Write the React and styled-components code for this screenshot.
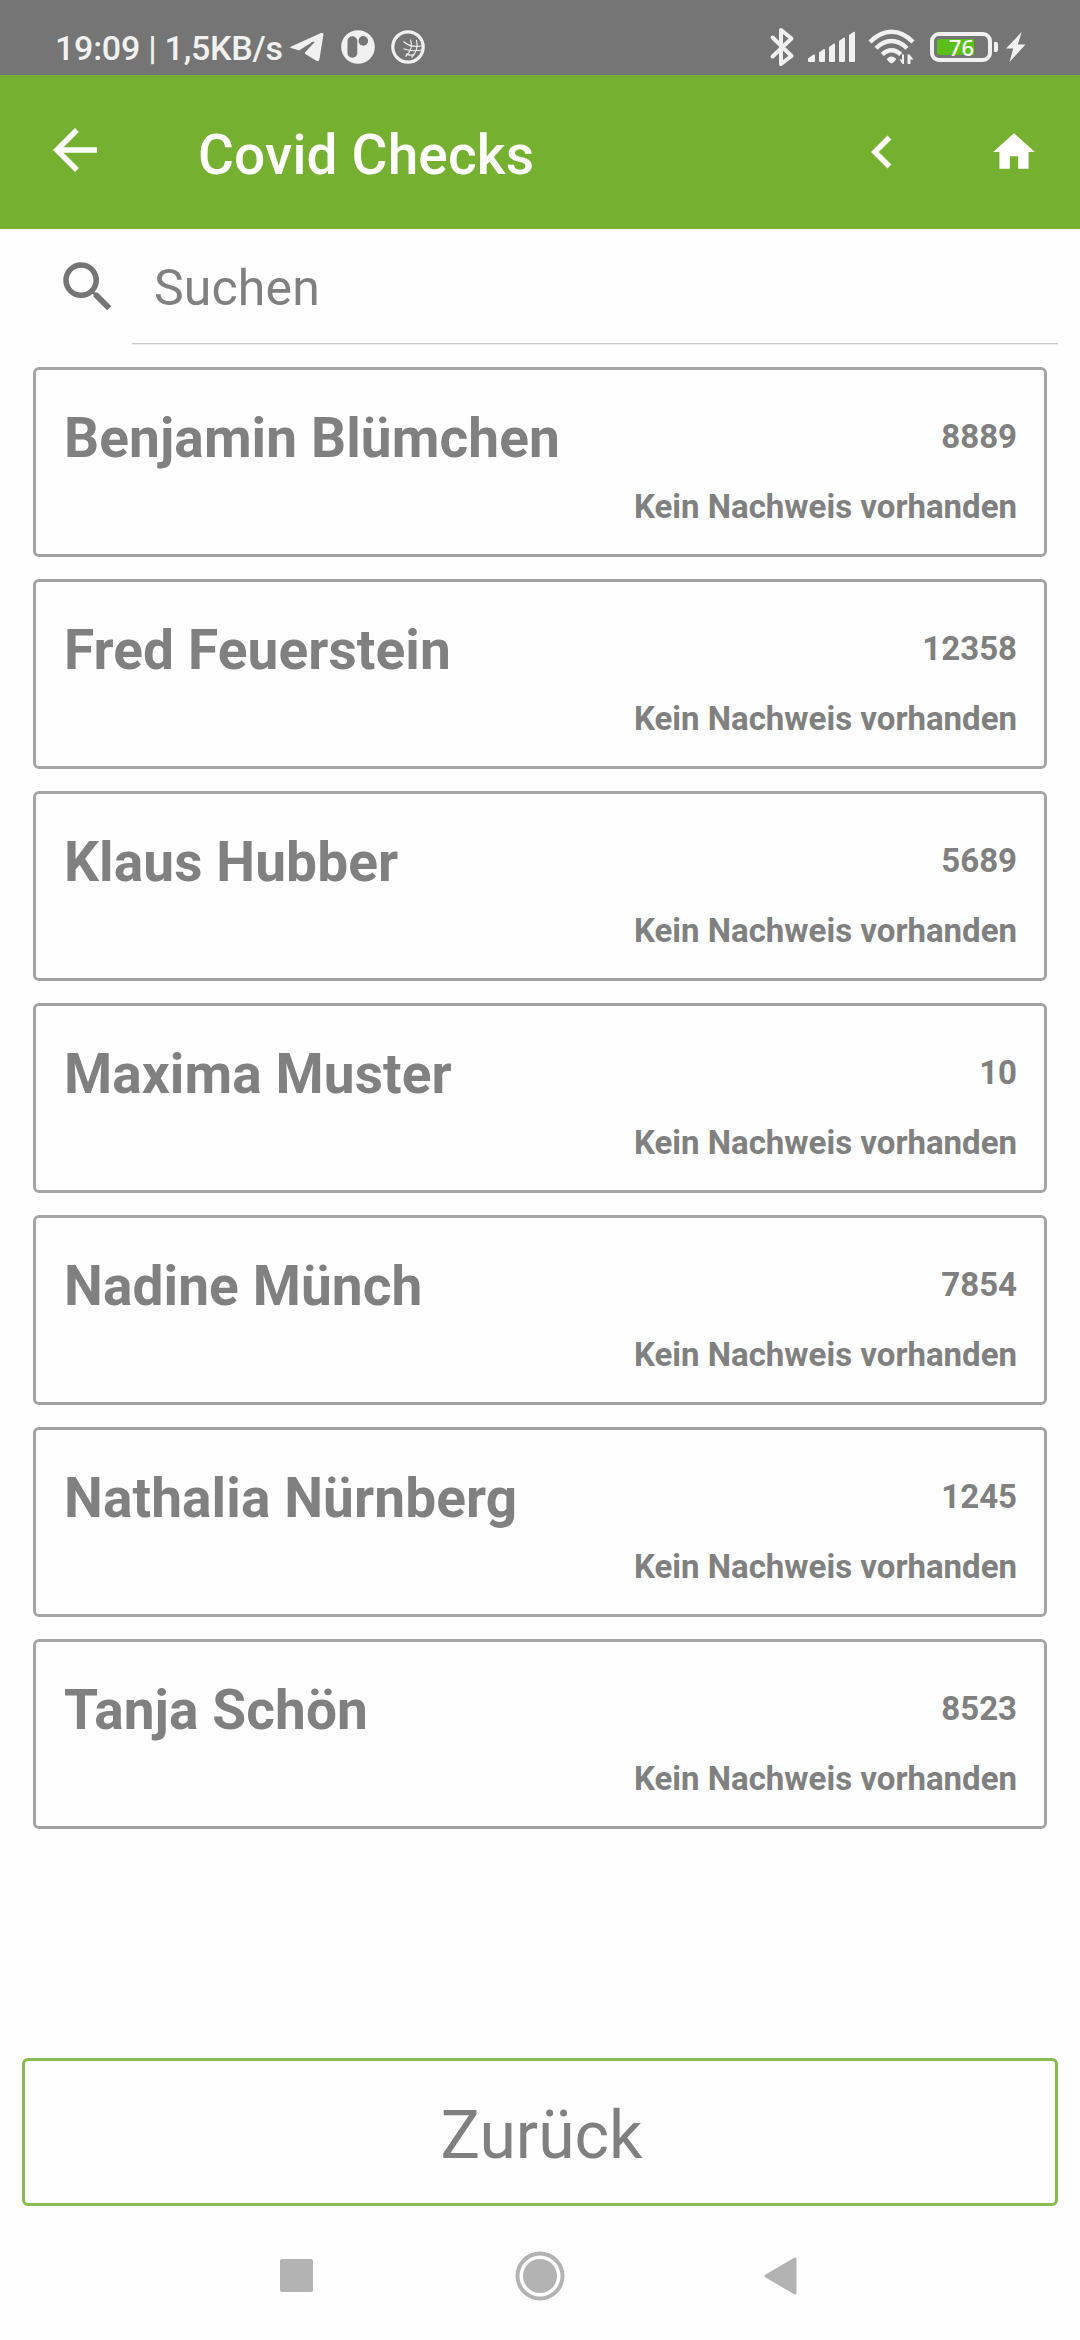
import React from "react";
import styled, { createGlobalStyle } from "styled-components";
import { MdArrowBack, MdChevronLeft, MdHome, MdSearch } from "react-icons/md";

const people = [
  { name: "Benjamin Blümchen", number: "8889" },
  { name: "Fred Feuerstein", number: "12358" },
  { name: "Klaus Hubber", number: "5689" },
  { name: "Maxima Muster", number: "10" },
  { name: "Nadine Münch", number: "7854" },
  { name: "Nathalia Nürnberg", number: "1245" },
  { name: "Tanja Schön", number: "8523" },
];

const StatusIcons = () => (
  <>
    {/* bluetooth */}
    <Icon width="28" height="42" viewBox="0 0 28 42" $left="0">
      <path
        d="M4.6 11.5 L23.5 30 L13 38 V4 L23.5 12.5 L4.6 30.5"
        fill="none"
        stroke="#f1f1f1"
        strokeWidth="4"
        strokeLinecap="round"
        strokeLinejoin="round"
      />
    </Icon>
    {/* signal */}
    <Icon width="48" height="32" viewBox="0 0 48 32" $left="12">
      <g fill="#f1f1f1">
        <path d="M0 27.5 L5.5 23.5 Q7 23 7 24.5 V30 Q7 31 6 31 H1 Q0 31 0 30z" />
        <path d="M11 21.5 L15.8 18 Q17 17.5 17 19 V30 Q17 31 16 31 H12 Q11 31 11 30z" />
        <path d="M21 16 L25.8 12.5 Q27 12 27 13.5 V30 Q27 31 26 31 H22 Q21 31 21 30z" />
        <path d="M31 10 L35.8 6.5 Q37 6 37 7.5 V30 Q37 31 36 31 H32 Q31 31 31 30z" />
        <path d="M41 4 L45.8 .8 Q47 .2 47 1.7 V30 Q47 31 46 31 H42 Q41 31 41 30z" />
      </g>
    </Icon>
    {/* wifi with up/down arrows */}
    <Icon width="48" height="36" viewBox="0 0 48 36" $left="12">
      <g fill="none" stroke="#f1f1f1" strokeWidth="4.4">
        <path d="M2 13 Q12 2.7 23.5 2.7 T45 13" />
        <path d="M8 19.3 Q15 12 23.5 12 T39 19.3" />
        <path d="M14.3 25.5 Q18.5 21.2 23.5 21.2 T32.7 25.5" />
      </g>
      <path
        d="M18.7 30 Q23.5 25.2 28.3 30 Q27 32.5 24.6 34 Q23.5 34.5 22.4 34 Q20 32.5 18.7 30z"
        fill="#f1f1f1"
      />
      <path
        d="M36 25.5 V35 H34.5 L31.5 30.5 H34 V25.5z M39.5 35 V25.5 H41.5 L45.5 30.5 H42.5 V35z"
        fill="#f1f1f1"
      />
    </Icon>
    <Battery>
      <Charge>
        <Percent>76</Percent>
      </Charge>
    </Battery>
    <BatteryTip />
    <Icon width="20" height="30" viewBox="0 0 20 30" $left="8">
      <path d="M15.7 0 L0 16.5 H7.2 L3.5 30 L19.5 12.5 H11.8z" fill="#f1f1f1" />
    </Icon>
  </>
);

const App = () => {
  return (
    <Screen>
      <GlobalStyle />
      <StatusBar>
        <Clock>19:09 | 1,5KB/s</Clock>
        <Icon width="34" height="30" viewBox="0 0 34 30" $left="7">
          <path
            d="M.7 14.7 L31 1.1 Q33.6 .3 33.4 2.7 L29.4 27.4 Q28.8 30 26.3 28.8 L15.3 22 Q14.4 21 15.4 20 L24.3 10.5 Q24.5 9 22.7 9.7 L9.8 18 Q8.8 18.4 7.8 18 L.9 16 Q-.3 15.3 .7 14.7z"
            fill="#f1f1f1"
          />
        </Icon>
        <Icon width="34" height="34" viewBox="0 0 34 34" $left="17">
          <circle cx="17" cy="17" r="16.8" fill="#f1f1f1" />
          <rect x="6.5" y="6.3" width="9.8" height="21.5" rx="4.9" fill="#757575" />
          <circle cx="22.3" cy="10.9" r="4.8" fill="#757575" />
        </Icon>
        <Icon width="34" height="34" viewBox="0 0 34 34" $left="16">
          <circle cx="17" cy="17" r="15.2" fill="none" stroke="#f1f1f1" strokeWidth="3.2" />
          <g fill="none" stroke="#f1f1f1" strokeWidth="1.1">
            <path d="M12.5 11.5 Q19 18 31 15.8" />
            <path d="M12.5 18.8 Q21 22 31 20" />
            <path d="M15 24 Q19 26 23 24.5" />
            <path d="M19.5 9.5 Q23 18.5 14.5 26.5" />
            <path d="M25.5 10 Q28 20 20.5 27.5" />
          </g>
        </Icon>
        <Spacer />
        <StatusIcons />
      </StatusBar>

      <AppBar>
        <MdArrowBack size={66} />
        <Title>Covid Checks</Title>
        <ChevronIcon size={66} />
        <HomeIcon size={50} />
      </AppBar>

      <SearchBar>
        <MdSearch size={66} />
        <SearchField>Suchen</SearchField>
      </SearchBar>

      <List>
        {people.map((person) => (
          <Card key={person.number}>
            <Name>{person.name}</Name>
            <Info>
              <span>{person.number}</span>
              <span>Kein Nachweis vorhanden</span>
            </Info>
          </Card>
        ))}
      </List>

      <BackButton>Zurück</BackButton>

      <NavBar>
        <svg width="33" height="33">
          <rect width="33" height="33" rx="2" fill="#b3b3b3" />
        </svg>
        <svg width="50" height="50" viewBox="0 0 50 50">
          <circle cx="25" cy="25" r="22.5" fill="none" stroke="#b3b3b3" strokeWidth="4" />
          <circle cx="25" cy="25" r="17" fill="#b3b3b3" />
        </svg>
        <svg width="33" height="38" viewBox="0 0 33 38">
          <path
            d="M2 19 L31 2 V36z"
            fill="#b3b3b3"
            stroke="#b3b3b3"
            strokeWidth="3"
            strokeLinejoin="round"
          />
        </svg>
      </NavBar>
    </Screen>
  );
};

const GlobalStyle = createGlobalStyle`
  body {
    margin: 0;
    background-color: #fefefe;
  }
  * {
    box-sizing: border-box;
  }
`;

const Screen = styled.div`
  display: flex;
  flex-direction: column;
  width: 1080px;
  height: 2340px;
  overflow: hidden;
  background-color: #fefefe;
  color: #808080;
  font-family: Roboto, sans-serif;
`;

const StatusBar = styled.div`
  display: flex;
  align-items: center;
  height: 75px;
  padding: 19px 54px 0 55px;
  background-color: #757575;
  color: #f1f1f1;
`;

const Clock = styled.span`
  padding-top: 2px;
  font-size: 34px;
  font-weight: 500;
  letter-spacing: -0.25px;
  line-height: 40px;
  white-space: nowrap;
`;

const Icon = styled.svg`
  flex: none;
  margin-left: ${(props) => props.$left}px;
`;

const Spacer = styled.div`
  flex: 1;
`;

const Battery = styled.div`
  width: 62px;
  height: 30px;
  margin-left: 14px;
  padding: 3px;
  border: 4px solid #f1f1f1;
  border-radius: 9px;
`;

const Charge = styled.div`
  display: flex;
  align-items: center;
  justify-content: flex-end;
  width: 37px;
  height: 16px;
  border-radius: 3px 0 0 3px;
  background-color: #5abf1b;
`;

const Percent = styled.span`
  color: #ffffff;
  font-family: "Noto Sans", sans-serif;
  font-size: 22px;
  font-weight: 500;
  line-height: 16px;
`;

const BatteryTip = styled.div`
  width: 4px;
  height: 10px;
  margin-left: 2px;
  border-radius: 0 2px 2px 0;
  background-color: #f1f1f1;
`;

const AppBar = styled.div`
  display: flex;
  align-items: center;
  height: 154px;
  padding: 0 41px 4px 42px;
  background-color: #76b031;
  color: #ffffff;
`;

const Title = styled.h1`
  flex: 1;
  margin: 10px 0 0 90px;
  font-size: 55px;
  font-weight: 500;
  letter-spacing: 0.15px;
  line-height: 64px;
`;

const ChevronIcon = styled(MdChevronLeft)`
  margin-top: 4px;
`;

const HomeIcon = styled(MdHome)`
  margin: 4px 0 0 74px;
`;

const SearchBar = styled.div`
  display: flex;
  height: 116px;
  padding: 0 22px 0 55px;
  color: #757575;
  & > svg {
    margin-top: 25px;
  }
`;

const SearchField = styled.div`
  flex: 1;
  height: 115px;
  margin-left: 11px;
  padding: 30px 22px 0;
  border-bottom: 1px solid #c8c8c8;
  box-shadow: 0 1px 0 #eeeeee;
  color: #808080;
  font-size: 50px;
  letter-spacing: 0.15px;
  line-height: 59px;
`;

const List = styled.div`
  display: flex;
  flex-direction: column;
  flex: 1;
  gap: 22px;
  padding: 22px 33px 0;
`;

const Card = styled.div`
  display: flex;
  justify-content: space-between;
  height: 190px;
  padding: 36px 27px 0 28px;
  border: 3px solid #a4a4a4;
  border-radius: 6px;
  font-weight: 700;
`;

const Name = styled.div`
  font-size: 55px;
  letter-spacing: 0.1px;
  line-height: 64px;
`;

const Info = styled.div`
  display: flex;
  flex-direction: column;
  align-items: flex-end;
  gap: 30px;
  padding-top: 11px;
  font-size: 33px;
  line-height: 40px;
`;

const BackButton = styled.button`
  height: 148px;
  margin: 0 22px;
  padding: 8px 0 0 3px;
  border: 3px solid #8aba52;
  border-radius: 6px;
  background: none;
  color: #808080;
  font-family: inherit;
  font-size: 66px;
  line-height: 76px;
`;

const NavBar = styled.div`
  display: grid;
  grid-template-columns: 235px 249px 33px;
  align-items: center;
  height: 134px;
  padding: 5px 0 0 280px;
`;

export default App;
